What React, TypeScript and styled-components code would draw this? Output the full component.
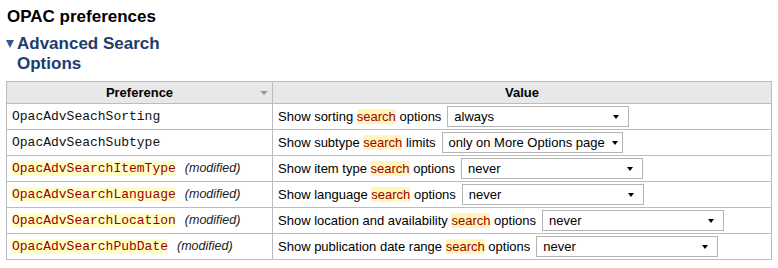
import { createGlobalStyle } from "styled-components";
import styled from "styled-components";

const GlobalStyle = createGlobalStyle`
  body {
    margin: 0;
    background: #ffffff;
    font-family: "Liberation Sans", Arial, sans-serif;
    color: #000;
  }
`;

type PrefRow = {
  name: string;
  modified: boolean;
  before: string;
  after: string;
  value: string;
  width: number;
  arrow: number;
};

const rows: PrefRow[] = [
  { name: "OpacAdvSeachSorting", modified: false, before: "Show sorting", after: "options", value: "always", width: 182, arrow: 9 },
  { name: "OpacAdvSeachSubtype", modified: false, before: "Show subtype", after: "limits", value: "only on More Options page", width: 181, arrow: 4 },
  { name: "OpacAdvSearchItemType", modified: true, before: "Show item type", after: "options", value: "never", width: 182, arrow: 9 },
  { name: "OpacAdvSearchLanguage", modified: true, before: "Show language", after: "options", value: "never", width: 182, arrow: 9 },
  { name: "OpacAdvSearchLocation", modified: true, before: "Show location and availability", after: "options", value: "never", width: 182, arrow: 9 },
  { name: "OpacAdvSearchPubDate", modified: true, before: "Show publication date range", after: "options", value: "never", width: 182, arrow: 9 },
];

const Page = styled.div`
  padding: 7px 6px 0 6px;
`;

const Title = styled.h1`
  margin: 0 0 0 1px;
  font-size: 17px;
  line-height: 19px;
  font-weight: bold;
`;

const Section = styled.h2`
  display: flex;
  width: 170px;
  margin: 8px 0 7px 0;
  font-size: 17px;
  line-height: 20px;
  font-weight: bold;
  color: #1e3d6b;
`;

const Toggle = styled.span`
  flex: none;
  width: 0;
  height: 0;
  margin: 6px 3px 0 0;
  border-left: 4.5px solid transparent;
  border-right: 4.5px solid transparent;
  border-top: 8px solid #34598a;
`;

const Table = styled.table`
  width: 766px;
  border-collapse: collapse;
  font-size: 13px;
`;

const Th = styled.th<{ $w?: number }>`
  position: relative;
  height: 21px;
  padding: 0;
  width: ${(p) => (p.$w ? `${p.$w}px` : "auto")};
  background: #e8e8e8;
  border: 1px solid #bcbcbc;
  font-weight: bold;
  text-align: center;
`;

const SortArrow = styled.span`
  position: absolute;
  right: 4px;
  top: 9px;
  width: 0;
  height: 0;
  border-left: 4px solid transparent;
  border-right: 4px solid transparent;
  border-top: 4px solid #999988;
`;

const Td = styled.td`
  height: 25px;
  padding: 0 5px;
  border: 1px solid #bcbcbc;
  vertical-align: middle;
`;

const NameCell = styled(Td)`
  vertical-align: top;
  padding-top: 4px;
  height: 21px;
`;

const Code = styled.code<{ $mod: boolean }>`
  font-family: "Liberation Mono", "Courier New", monospace;
  font-size: 13px;
  color: ${(p) => (p.$mod ? "#990000" : "#111")};
  background: ${(p) => (p.$mod ? "#ffffc4" : "transparent")};
`;

const Modified = styled.em`
  margin-left: 9px;
  font-size: 12.5px;
  color: #222;
`;

const ValueLine = styled.div`
  display: flex;
  align-items: center;
  gap: 6px;
`;

const Hit = styled.span`
  color: #a00000;
  background: #fff6b8;
`;

const SelectBox = styled.div<{ $arrow: number }>`
  position: relative;
  display: flex;
  align-items: center;
  box-sizing: border-box;
  height: 21px;
  padding: 0 0 0 6px;
  border: 1px solid #b4b4b4;
  background: #fff;
  font-size: 13px;
  white-space: nowrap;
  &::after {
    content: "";
    position: absolute;
    right: ${(p) => p.$arrow}px;
    top: 8px;
    border-left: 3.5px solid transparent;
    border-right: 3.5px solid transparent;
    border-top: 4px solid #000;
  }
`;

export default function App() {
  return (
    <Page>
      <GlobalStyle />
      <Title>OPAC preferences</Title>
      <Section>
        <Toggle />
        <span>Advanced Search Options</span>
      </Section>
      <Table>
        <thead>
          <tr>
            <Th $w={265}>
              Preference
              <SortArrow />
            </Th>
            <Th>Value</Th>
          </tr>
        </thead>
        <tbody>
          {rows.map((r) => (
            <tr key={r.name}>
              <NameCell>
                <Code $mod={r.modified}>{r.name}</Code>
                {r.modified && <Modified>(modified)</Modified>}
              </NameCell>
              <Td>
                <ValueLine>
                  <span>
                    {r.before} <Hit>search</Hit> {r.after}
                  </span>
                  <SelectBox $arrow={r.arrow} style={{ width: r.width }}>
                    {r.value}
                  </SelectBox>
                </ValueLine>
              </Td>
            </tr>
          ))}
        </tbody>
      </Table>
    </Page>
  );
}
